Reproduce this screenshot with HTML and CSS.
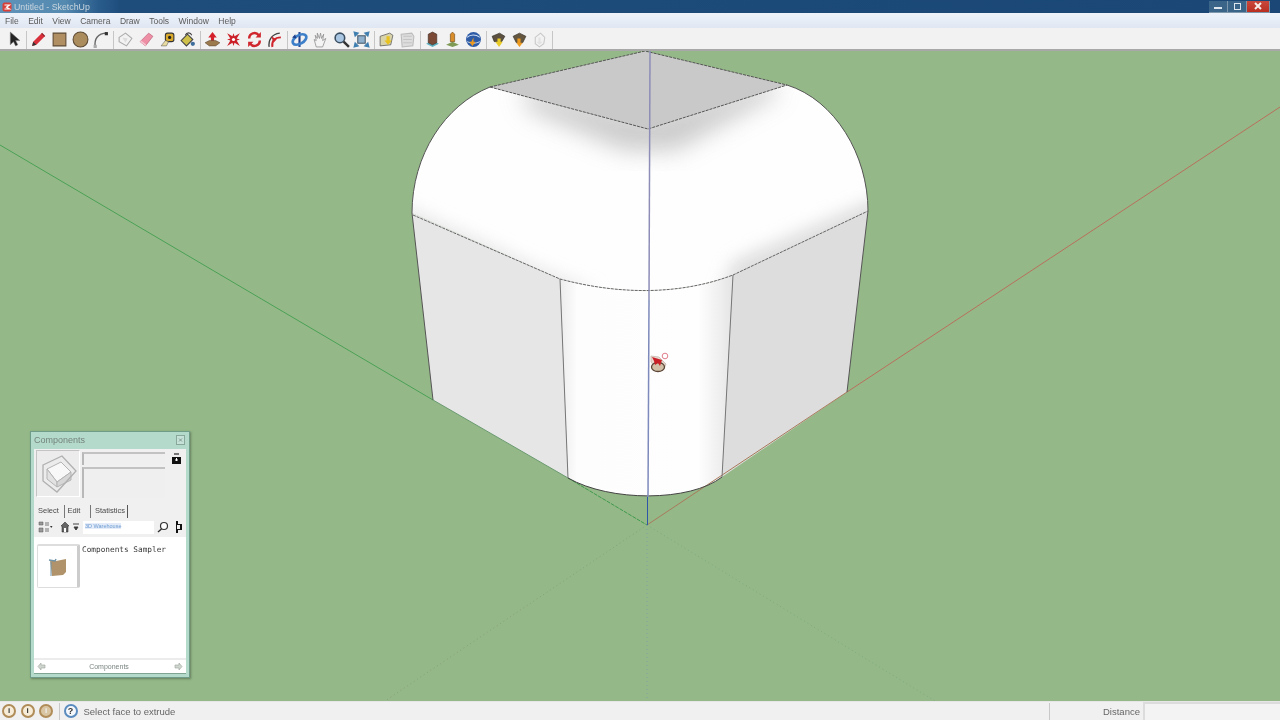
FILE: index.html
```html
<!DOCTYPE html>
<html lang="en">
<head>
<meta charset="utf-8">
<title>Untitled - SketchUp</title>
<link rel="stylesheet" href="styles.css">
</head>
<body>
<div class="app">
  <header class="titlebar">
    <svg class="app-logo" viewBox="0 0 10 10" width="10" height="10"><rect x="0.5" y="0.5" width="9" height="9" rx="2" fill="#d8403a"/><path d="M2.5 3h5L4.500 5.200 7.500 7h-5" fill="none" stroke="#fff" stroke-width="1.200"/></svg>
    <span class="title-text">Untitled - SketchUp</span>
    <div class="win-btns">
      <span class="win-btn"><i class="glyph-min"></i></span>
      <span class="win-btn"><i class="glyph-max"></i></span>
      <span class="win-btn close"><svg viewBox="0 0 8 8" width="8" height="8"><path d="M1 1l6 6M7 1L1 7" stroke="#f6eeea" stroke-width="2"/></svg></span>
    </div>
  </header>
  <nav class="menubar">
    <span>File</span><span>Edit</span><span>View</span><span>Camera</span><span>Draw</span><span>Tools</span><span>Window</span><span>Help</span>
  </nav>
  <div class="toolbar">
    <span class="tool first"><svg viewBox="0 0 16 16"><path d="M5 1v12l3-3 2 4 2-1-2-4h4z" fill="#222" stroke="#777" stroke-width=".5"/></svg></span>
    <i class="sep"></i>
    <span class="tool"><svg viewBox="0 0 16 16"><path d="M2 14l1-4 8-8 3 3-8 8z" fill="#d8303a"/><path d="M2 14l1-4 3 3z" fill="#333"/><path d="M11 2l3 3" stroke="#8a1a20"/></svg></span>
    <span class="tool"><svg viewBox="0 0 16 16"><path d="M2 2h12v12H2z" fill="#b08f62" stroke="#5d4a33"/></svg></span>
    <span class="tool"><svg viewBox="0 0 16 16"><circle cx="8" cy="8" r="7" fill="#ab8c5d" stroke="#5d4a33"/></svg></span>
    <span class="tool"><svg viewBox="0 0 16 16"><path d="M3 15C2 8 5 2 14 2" fill="none" stroke="#666" stroke-width="1.300"/><rect x="12" y="1" width="3" height="3" fill="#333"/><rect x="1.500" y="13" width="3" height="3" fill="#aaa"/></svg></span>
    <i class="sep"></i>
    <span class="tool"><svg viewBox="0 0 16 16"><path d="M2 6l6-4 6 5-5 7-7-4z" fill="#f2f2f2" stroke="#aaa"/><path d="M5 6l5 1-2 4z" fill="#ddd"/></svg></span>
    <span class="tool"><svg viewBox="0 0 16 16"><path d="M2 10l8-8 4 3-7 9z" fill="#ee8fa6" stroke="#b85a70" stroke-width=".6"/><path d="M2 10l5 4 1-1-5-4z" fill="#f7c2cf"/></svg></span>
    <span class="tool"><svg viewBox="0 0 16 16"><rect x="6" y="2" width="8" height="8" rx="2" fill="#d9a92c" stroke="#333"/><circle cx="10" cy="6" r="1.500" fill="#222"/><path d="M6 9l-4 5h5l2-4z" fill="#e9dca0" stroke="#555" stroke-width=".5"/></svg></span>
    <span class="tool"><svg viewBox="0 0 16 16"><path d="M2 9l6-6 5 5-6 6z" fill="#cfc04a" stroke="#444"/><path d="M6 4c1-3 5-3 6 0" fill="none" stroke="#444"/><circle cx="13" cy="12" r="2" fill="#3f6e9c"/></svg></span>
    <i class="sep"></i>
    <span class="tool"><svg viewBox="0 0 16 16"><path d="M8 1l4 5H9.500v4h-3V6H4z" fill="#d3202a"/><path d="M1 11l4-2h6l4 2-4 3H5z" fill="#9b7a4d" stroke="#5d4a33" stroke-width=".5"/></svg></span>
    <span class="tool"><svg viewBox="0 0 16 16"><path d="M2 2l5 3 1-3 1 3 5-3-3 5 3 1-3 1 3 5-5-3-1 3-1-3-5 3 3-5-3-1 3-1z" fill="#cc2028"/><circle cx="8" cy="8" r="1.500" fill="#fff"/></svg></span>
    <span class="tool"><svg viewBox="0 0 16 16"><path d="M3 7a5 5 0 0 1 9-3M13 9a5 5 0 0 1-9 3" fill="none" stroke="#d0262e" stroke-width="2.300"/><path d="M14 1v5H9zM2 15v-5h5z" fill="#d0262e"/></svg></span>
    <span class="tool"><svg viewBox="0 0 16 16"><path d="M3 15C2 9 5 3 13 2" fill="none" stroke="#444" stroke-width="1.300"/><path d="M6 15C5 10 8 6 14 6" fill="none" stroke="#d0262e" stroke-width="1.800"/><path d="M5 5l5 3-3 3z" fill="#d0262e"/></svg></span>
    <i class="sep"></i>
    <span class="tool"><svg viewBox="0 0 16 16"><path d="M8 1v14" stroke="#1c3f8c" stroke-width="2"/><ellipse cx="8" cy="8" rx="7" ry="4" fill="none" stroke="#3d7fc8" stroke-width="2.500" transform="rotate(-30 8 8)"/><path d="M1 6l3-3 1 4z" fill="#1c3f8c"/></svg></span>
    <span class="tool"><svg viewBox="0 0 16 16"><path d="M4 15L2 8l2 1-1-5 2 3V2l2 5 1-5 1 5 2-4-1 6 3-2-3 8z" fill="#f4f4f4" stroke="#888" stroke-width=".7"/></svg></span>
    <span class="tool"><svg viewBox="0 0 16 16"><circle cx="6.500" cy="6.500" r="4.500" fill="#a9c6e2" stroke="#3b4f62" stroke-width="1.500"/><path d="M10 10l5 5" stroke="#333" stroke-width="2.300"/></svg></span>
    <span class="tool"><svg viewBox="0 0 16 16"><path d="M1 1l4 1-3 3zM15 1l-4 1 3 3zM1 15l4-1-3-3zM15 15l-4-1 3-3z" fill="#3f7fb0" stroke="#3f7fb0"/><rect x="4.500" y="4.500" width="7" height="7" fill="#8fb0cc" stroke="#46596b"/></svg></span>
    <i class="sep"></i>
    <span class="tool"><svg viewBox="0 0 16 16"><path d="M2 5l9-3 3 2-2 9-10 1z" fill="#d9d3aa" stroke="#555" stroke-width=".7"/><path d="M8 5h3v4h2l-3.500 4L6 9h2z" fill="#e8c21f"/></svg></span>
    <span class="tool"><svg viewBox="0 0 16 16"><path d="M2 3l10-1 2 3-1 9-10 1z" fill="#ddd" stroke="#bbb"/><path d="M4 5h8M4 8h8M4 11h8" stroke="#c4c4c4"/></svg></span>
    <i class="sep"></i>
    <span class="tool"><svg viewBox="0 0 16 16"><path d="M2 12l6-3 6 3-6 3z" fill="#5fb0bf"/><path d="M4 3l4-2 4 2v8l-4 2-4-2z" fill="#7a4a36" stroke="#3f2a20" stroke-width=".6"/></svg></span>
    <span class="tool"><svg viewBox="0 0 16 16"><path d="M2 13l6-3 6 3-6 2z" fill="#7e9a55"/><path d="M6 10V3l2-2 2 2v7z" fill="#d98c2a" stroke="#6f4a18" stroke-width=".6"/></svg></span>
    <span class="tool"><svg viewBox="0 0 16 16"><circle cx="8" cy="8" r="7" fill="#2e5ba6"/><path d="M2 6c3-3 8-3 12 0M2 10c4 2 8 2 12 0" stroke="#cfe0f4" fill="none"/><path d="M8 6v4h2l-3 4-3-4h2z" fill="#ee9a1e"/></svg></span>
    <i class="sep"></i>
    <span class="tool"><svg viewBox="0 0 16 16"><path d="M2 5l7-3 5 3-3 5H4z" fill="#5c5140" stroke="#2d2a22" stroke-width=".6"/><path d="M7 7h3v3h2l-3.500 5L5 10h2z" fill="#e9cb28"/></svg></span>
    <span class="tool"><svg viewBox="0 0 16 16"><path d="M2 5l6-3 6 3-3 6H5z" fill="#64563f" stroke="#2d2a22" stroke-width=".6"/><path d="M6 7h3v4h2l-3 4-3-4h1z" fill="#ee9a1e"/></svg></span>
    <span class="tool"><svg viewBox="0 0 16 16"><path d="M4 6l5-4 4 4-1 6-4 3-4-3z" fill="#f2f2f2" stroke="#c8c8c8"/><path d="M7 6h2v4h2l-3 3-3-3h2z" fill="#e2e2e2"/></svg></span>
    <i class="sep"></i>
  </div>

  <main class="canvas">
    <svg class="scene" viewBox="0 51 1280 650" preserveAspectRatio="none" aria-hidden="true">
      <defs>
        <filter id="soft" x="-30%" y="-30%" width="160%" height="160%"><feGaussianBlur stdDeviation="12"/></filter>
        <filter id="softer" x="-30%" y="-30%" width="160%" height="160%"><feGaussianBlur stdDeviation="9"/></filter>
        <clipPath id="dome"><path d="M490 87C445 105 412 155 412 213L560 279C620 295 680 295 733 275L868 211C868 155 835 100 787 85L648 129Z"/></clipPath>
        <linearGradient id="col" x1="0" x2="1" y1="0" y2="0">
          <stop offset="0" stop-color="#ececec"/><stop offset=".1" stop-color="#fdfdfd"/><stop offset=".8" stop-color="#fefefe"/><stop offset=".93" stop-color="#eeeeee"/><stop offset="1" stop-color="#e4e4e4"/>
        </linearGradient>
      </defs>
      <path d="M490 87L645 51 787 85 648 129Z" fill="#c9c9c9"/>
      <path d="M490 87C445 105 412 155 412 213L560 279C620 295 680 295 733 275L868 211C868 155 835 100 787 85L648 129Z" fill="#fefefe"/>
      <g clip-path="url(#dome)">
        <path d="M520 88L648 118 770 82 780 92 675 150 625 150 530 110Z" fill="#bcbcbc" filter="url(#soft)" opacity=".8"/>
        <path d="M400 205L560 278 600 292 540 296 400 240Z" fill="#dedede" filter="url(#softer)" opacity=".8"/>
        <path d="M885 195L733 262 720 295 885 230Z" fill="#d6d6d6" filter="url(#softer)" opacity=".85"/>
      </g>
      <path d="M412 213L433 400 568 478 560 279Z" fill="#e6e6e6"/>
      <path d="M733 275L868 211 847 392 722 477Z" fill="#dddddd"/>
      <path d="M560 279C620 295 680 295 733 275L722 477C690 502 610 502 568 478Z" fill="url(#col)"/>
      <path d="M0 145L433 400" stroke="#4aa155" stroke-width="1" fill="none"/>
      <path d="M433 400L568 478" stroke="#6a9a70" stroke-width="1" fill="none"/>
      <path d="M568 478L647 525" stroke="#3f9a4c" stroke-width="1" fill="none" stroke-dasharray="4 1"/>
      <path d="M1280 107L847 392" stroke="#b8705c" stroke-width="1" fill="none"/>
      <path d="M847 392L647 525" stroke="#a87a5c" stroke-width="1" fill="none"/>
      <path d="M647 525L385 701" stroke="#86a27c" stroke-width="1" fill="none" stroke-dasharray="1 3"/>
      <path d="M647 525L935 701" stroke="#7cab80" stroke-width="1" fill="none" stroke-dasharray="1 3"/>
      <path d="M647 525V701" stroke="#7fa3a6" stroke-width="1" fill="none" stroke-dasharray="1 3"/>
      <g fill="none" stroke="#555" stroke-width="1">
        <path d="M490 87C445 105 412 155 412 213L433 400"/>
        <path d="M787 85C835 100 868 155 868 211L847 392"/>
        <path d="M560 279L568 478M733 275L722 477" stroke="#777"/>
        <path d="M568 478C610 502 690 502 722 477" stroke="#444"/>
        <path d="M490 87L645 51 787 85M490 87L648 129 787 85" stroke-dasharray="3 1"/>
        <path d="M413 215L560 279C620 295 680 295 733 275L868 211" stroke-dasharray="3 1" stroke="#666"/>
      </g>
      <path d="M650 51L649 300" stroke="#8d8db8" stroke-width="1.500" fill="none"/>
      <path d="M649 300L648 497" stroke="#7e8abc" stroke-width="1.500" fill="none"/>
      <path d="M647.500 497V525" stroke="#2f55a8" stroke-width="1" fill="none"/>
      <g>
        <path d="M651 356l8 1 7 7-2 5-8-1-5-6z" fill="#e8d8d0" stroke="#b9a89c" stroke-width=".6"/>
        <ellipse cx="658" cy="367" rx="6.500" ry="4.500" fill="#d2bfa8" stroke="#5b4636" stroke-width="1.300"/>
        <path d="M652 357l10 3-2 6-2-3-3 2-1-4z" fill="#c92028"/>
        <circle cx="665" cy="356" r="2.800" fill="#fff" stroke="#d86070" stroke-width=".8"/>
      </g>
    </svg>

    <section class="panel">
      <div class="panel-title"><span>Components</span><svg class="panel-close" viewBox="0 0 9 10" width="9" height="10"><rect x=".5" y=".5" width="8" height="9" fill="#c6e2d8" stroke="#87a89b"/><path d="M3 3.500l3 3M6 3.500l-3 3" stroke="#7f9a90"/></svg></div>
      <div class="panel-body">
        <div class="preview">
          <div class="thumb">
            <svg viewBox="0 0 42 46" width="42" height="46"><path d="M10 18L24 11 34 21 20 31Z" fill="#f8f8f8" stroke="#b4b4b4"/><path d="M10 18v10l10 8V31Z" fill="#e2e2e2" stroke="#b4b4b4"/><path d="M34 21v8L20 36v-5Z" fill="#d6d6d6" stroke="#b4b4b4"/><path d="M6 14L25 5 39 20 20 41 6 30Z" fill="none" stroke="#b0b0b0" stroke-width="1.300"/></svg>
          </div>
          <div class="fields"><div class="field name"></div><div class="field desc"></div></div>
          <svg class="lock" viewBox="0 0 9 12" width="9" height="12"><rect width="9" height="12" fill="#eee"/><rect y="5" width="9" height="7" fill="#111"/><path d="M2 1h5v2H2z" fill="#777"/><path d="M4.500 6v3M3 8h3" stroke="#fff"/></svg>
        </div>
        <div class="tabs"><span class="tab tab-select">Select</span><span class="tab tab-edit">Edit</span><span class="tab tab-stats">Statistics</span></div>
        <div class="search-row">
          <svg viewBox="0 0 15 12" width="15" height="12"><path d="M1 1h4v3H1zM1 7h4v4H1z" fill="#999" stroke="#555" stroke-width=".5"/><path d="M7 2h4M7 4h4M7 8h4M7 10h4" stroke="#777"/><path d="M12 5l2.500 0-1.200 2z" fill="#333"/></svg>
          <svg class="caret-gap" viewBox="0 0 10 12" width="10" height="12"><path d="M5 1L1 5h1v6h6V5h1z" fill="#666" stroke="#222" stroke-width=".5"/><rect x="4" y="7" width="2" height="4" fill="#fff"/></svg>
          <svg viewBox="0 0 7 12" width="7" height="12"><path d="M0 3h6M1 6h4l-2 3z" stroke="#444" fill="#333"/></svg>
          <div class="search"><span>3D Warehouse</span></div>
          <svg class="mag" viewBox="0 0 12 12" width="12" height="12"><circle cx="7" cy="5" r="3.500" fill="#fff" stroke="#333" stroke-width="1.200"/><path d="M4.500 8L1 11" stroke="#333" stroke-width="1.500"/></svg>
          <svg class="nav" viewBox="0 0 10 12" width="10" height="12"><path d="M3 0h2v3h4v6H5v3H3z" fill="#111"/><rect x="4" y="4" width="3" height="4" fill="#eee"/></svg>
        </div>
        <div class="list">
          <div class="item-thumb"><svg viewBox="0 0 20 20" width="20" height="20"><path d="M2 3l6 1 10-2v13l-3 3-11 1z" fill="#b0936a"/><path d="M1 3l6 1 1-2" fill="none" stroke="#6f94a8" stroke-width="1.500"/><path d="M3 5v14" stroke="#6f94a8" stroke-width="1"/></svg></div>
          <span class="item-name">Components Sampler</span>
        </div>
        <div class="panel-foot">
          <svg viewBox="0 0 9 9" width="9" height="9"><path d="M1 4.500L4 1v2h4v3H4v2z" fill="#cfd5cf" stroke="#9aa39a" stroke-width=".6"/></svg>
          <span>Components</span>
          <svg viewBox="0 0 9 9" width="9" height="9"><path d="M8 4.500L5 1v2H1v3h4v2z" fill="#cfd5cf" stroke="#9aa39a" stroke-width=".6"/></svg>
        </div>
      </div>
    </section>
  </main>

  <footer class="statusbar">
    <span class="coin"><b>i</b></span>
    <span class="coin"><b>i</b></span>
    <span class="coin tan"><b>i</b></span>
    <i class="status-sep"></i>
    <span class="help">?</span>
    <span class="status-text">Select face to extrude</span>
    <i class="status-sep right"></i>
    <span class="vcb-label">Distance</span>
    <span class="vcb"></span>
  </footer>
</div>
</body>
</html>
```

FILE: styles.css
```css
* { box-sizing: border-box; }
html, body { margin: 0; height: 100%; overflow: hidden; }
body { font-family: "Liberation Sans", Arial, sans-serif; background: #f0f0f0; }
i { display: block; font-style: normal; }
svg { display: block; }

.app { width: 1280px; height: 720px; display: flex; flex-direction: column; filter: blur(.4px); }

.titlebar {
  height: 13px; flex: none; display: flex; align-items: center; padding-left: 2px;
  background: linear-gradient(90deg, #5f93ba 0, #5489b0 65px, #2a5d8c 98px, #1e4d7c 120px, #1a4775 100%);
}
.app-logo { margin-right: 2px; }
.title-text { font-size: 8.800px; color: #c9d6de; }
.win-btns { margin-left: auto; margin-right: 10px; display: flex; height: 12px; }
.win-btn { width: 19px; display: flex; align-items: center; justify-content: center; background: #3a6488; border: 1px solid #7d97ad; border-top: 0; border-left-width: 0; }
.win-btn.close { width: 23px; background: linear-gradient(#c8493c, #b92f22); }
.glyph-min { width: 8px; height: 2px; background: #dfe7ee; margin-top: 3px; }
.glyph-max { width: 7px; height: 7px; border: 1.500px solid #dfe7ee; }

.menubar {
  height: 15px; flex: none; display: flex; align-items: center; padding: 1px 0 0 5px; gap: 9.500px;
  background: linear-gradient(#eef3fa, #dfe7f3); font-size: 8.500px; color: #5a5a5a;
}

.toolbar {
  height: 23px; flex: none; display: flex; align-items: center; padding: 2px 0 0 3.500px;
  background: #f2f2f2; border-bottom: 2px solid #a8a8a8;
}
.tool { width: 20.750px; height: 19px; display: flex; align-items: center; justify-content: center; flex: none; }
.tool svg { width: 17px; height: 17px; }
.sep { width: 1px; height: 18px; background: #c6c6c6; margin: 0 1px 0 2px; flex: none; }

.canvas { flex: 1; position: relative; background: #95b888; min-height: 0; }
.scene { position: absolute; inset: 0; width: 100%; height: 100%; }

.panel {
  position: absolute; left: 30px; top: 380px; width: 160px; height: 247px;
  background: #b4dacb; border: 1px solid #6e9c88; box-shadow: 1px 1px 2px rgba(50,70,50,.5);
  display: flex; flex-direction: column; padding: 0 3px 3px;
}
.panel-title { height: 17px; flex: none; display: flex; align-items: center; justify-content: space-between; font-size: 9px; color: #74847e; padding: 0 0 2px 0; }
.panel-close { margin-right: 1px; }
.panel-body { flex: 1; min-height: 0; background: #f0f0f0; display: flex; flex-direction: column; border-bottom: 1px solid #7ea592; }

.preview { height: 52px; flex: none; display: flex; padding: 1px 2px; gap: 2px; position: relative; }
.thumb { width: 44px; height: 47px; background: #ececec; border: 1px solid #c4c4c4; border-right-color: #fff; border-bottom-color: #fff; display: flex; align-items: center; justify-content: center; }
.fields { width: 83px; display: flex; flex-direction: column; gap: 2px; padding-top: 2px; }
.field { background: #efefef; border-top: 2px solid #c2c2c2; border-left: 2px solid #b8b8b8; }
.field.name { height: 13px; }
.field.desc { height: 31px; }
.lock { position: absolute; right: 5px; top: 3px; }

.tabs { height: 15px; flex: none; display: flex; align-items: center; padding: 1px 0 0 4px; font-size: 7.500px; color: #4a4a4a; margin-top: 2px; }
.tab { height: 13px; line-height: 12px; flex: none; }
.tab-select { width: 26px; }
.tab-edit { width: 26px; padding-left: 2.500px; border-left: 1px solid #777; }
.tab-stats { width: 38px; padding-left: 4px; border-left: 1px solid #777; border-right: 1px solid #555; }

.search-row { height: 16px; flex: none; display: flex; align-items: center; padding-left: 4px; margin-top: 1px; }
.caret-gap { margin-left: 7px; margin-right: 3px; }
.search { width: 71px; height: 13px; margin-left: 3px; background: #fff; font-size: 5.500px; color: #6d9bd2; padding: 2px 0 0 2px; }
.search span { background: #e3ecf8; }
.mag { margin-left: 3px; }
.nav { margin-left: 4px; }

.list { flex: 1; min-height: 0; background: #fff; margin-top: 2px; padding: 7px 0 0 3px; display: flex; align-items: flex-start; gap: 2px; }
.item-thumb { width: 43px; height: 44px; background: #fff; border: 1px solid #ddd; border-right: 3px solid #ccc; border-top: 2px solid #ddd; border-radius: 2px; display: flex; align-items: center; justify-content: center; flex: none; }
.item-name { font-family: "DejaVu Sans Mono", monospace; font-size: 7.750px; color: #3a3a3a; margin-top: 1px; }
.panel-foot { height: 15px; flex: none; background: #fff; border-top: 2px solid #ececec; display: flex; align-items: center; justify-content: space-between; padding: 0 3px 1px 3px; font-size: 7px; color: #7b8680; }
.panel-foot span { margin-right: 2px; }

.statusbar { height: 19px; flex: none; display: flex; align-items: center; background: #f0f0f0; border-top: 1px solid #e6e6e6; padding-left: 2px; font-size: 9.500px; color: #666; }
.coin { width: 14px; height: 14px; border-radius: 50%; border: 2px solid #b08c58; background: #f6ecd8; margin-right: 4.500px; display: flex; align-items: center; justify-content: center; font-size: 8px; line-height: 1; color: #333; flex: none; }
.coin.tan { background: #d9c5a2; }
.coin.tan b { color: #eee; }
.status-sep { width: 1px; height: 17px; background: #c8c8c8; margin: 0 4px 0 1px; flex: none; }
.help { width: 14px; height: 14px; border-radius: 50%; border: 2px solid #5a8cc0; background: #f4f8fc; margin-right: 6px; display: flex; align-items: center; justify-content: center; font-size: 9px; font-weight: 700; color: #333; flex: none; }
.status-sep.right { margin-left: auto; margin-right: 53px; }
.vcb-label { width: 40px; flex: none; }
.vcb { width: 137px; height: 18px; background: #f3f3f3; border-top: 2px solid #dcdcdc; border-left: 2px solid #dcdcdc; flex: none; }
```
